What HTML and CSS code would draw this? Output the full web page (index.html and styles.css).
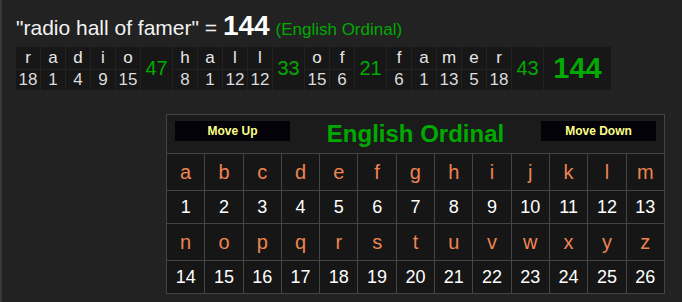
FILE: index.html
```html
<!DOCTYPE html>
<html>
<head>
<meta charset="utf-8">
<link rel="stylesheet" href="styles.css">
</head>
<body>
<div class="page">
  <div class="title">"radio hall of famer" = <b class="total">144</b> <span class="cipher-name">(English Ordinal)</span></div>
  <table class="word">
    <tr>
      <td class="l">r</td><td class="l">a</td><td class="l">d</td><td class="l">i</td><td class="l">o</td><td class="sum" rowspan="2">47</td>
      <td class="l">h</td><td class="l">a</td><td class="l">l</td><td class="l">l</td><td class="sum" rowspan="2">33</td>
      <td class="l">o</td><td class="l">f</td><td class="sum" rowspan="2">21</td>
      <td class="l">f</td><td class="l">a</td><td class="l">m</td><td class="l">e</td><td class="l">r</td><td class="sum" rowspan="2">43</td>
      <td class="grand" rowspan="2">144</td>
    </tr>
    <tr class="nums">
      <td>18</td><td>1</td><td>4</td><td>9</td><td>15</td>
      <td>8</td><td>1</td><td>12</td><td>12</td>
      <td>15</td><td>6</td>
      <td>6</td><td>1</td><td>13</td><td>5</td><td>18</td>
    </tr>
  </table>

  <table class="chart">
    <tr class="head">
      <td colspan="13">
        <div class="head-bar">
          <button class="move">Move Up</button>
          <span class="chart-title">English Ordinal</span>
          <button class="move">Move Down</button>
        </div>
      </td>
    </tr>
    <tr class="letters"><td>a</td><td>b</td><td>c</td><td>d</td><td>e</td><td>f</td><td>g</td><td>h</td><td>i</td><td>j</td><td>k</td><td>l</td><td>m</td></tr>
    <tr class="values"><td>1</td><td>2</td><td>3</td><td>4</td><td>5</td><td>6</td><td>7</td><td>8</td><td>9</td><td>10</td><td>11</td><td>12</td><td>13</td></tr>
    <tr class="letters"><td>n</td><td>o</td><td>p</td><td>q</td><td>r</td><td>s</td><td>t</td><td>u</td><td>v</td><td>w</td><td>x</td><td>y</td><td>z</td></tr>
    <tr class="values"><td>14</td><td>15</td><td>16</td><td>17</td><td>18</td><td>19</td><td>20</td><td>21</td><td>22</td><td>23</td><td>24</td><td>25</td><td>26</td></tr>
  </table>
</div>
</body>
</html>
```
FILE: styles.css
```css
html, body {
  margin: 0;
  padding: 0;
}
body {
  background: #222222;
  border-left: 2px solid #393939;
  min-height: 302px;
  box-sizing: border-box;
  font-family: "Liberation Sans", Arial, sans-serif;
  color: #e6e6e6;
}
.page {
  padding: 14px 0 0 14px;
}
.title {
  font-size: 21px;
  line-height: 24px;
  height: 26px;
  color: #f2f2f2;
  white-space: nowrap;
}
.total {
  font-size: 28px;
  line-height: 24px;
  font-weight: bold;
  color: #ffffff;
}
.cipher-name {
  font-size: 17px;
  color: #00aa00;
}
.word {
  border-collapse: separate;
  border-spacing: 1px;
  margin: 6px 0 0 -1px;
  background: #222222;
}
.word td {
  background: #171717;
  text-align: center;
  padding: 0;
  font-size: 17px;
}
.word td.l {
  width: 24px;
  height: 22px;
  color: #e8e8e8;
}
.word .nums td {
  height: 20px;
  color: #dcdcdc;
}
.word td.sum {
  width: 31px;
  font-size: 20px;
  color: #00aa00;
}
.word td.grand {
  width: 67px;
  font-size: 29px;
  font-weight: bold;
  color: #00aa00;
}
.chart {
  border-collapse: collapse;
  margin: 23px 0 0 150px;
  width: 499px;
  table-layout: fixed;
}
.chart td {
  border: 1px solid #444444;
  background: #161616;
  text-align: center;
  padding: 0;
}
.chart .head td {
  background: #1b1b1b;
  height: 38px;
}
.head-bar {
  display: flex;
  align-items: center;
  justify-content: space-between;
  padding: 0 8px;
}
.move {
  width: 115px;
  height: 20px;
  background: #020208;
  border: none;
  color: #ffff88;
  font-family: "Liberation Sans", Arial, sans-serif;
  font-size: 12px;
  font-weight: bold;
  padding: 0;
  margin-top: -6px;
}
.chart-title {
  font-size: 24px;
  font-weight: bold;
  color: #00aa00;
}
.chart .letters td {
  height: 36px;
  font-size: 20px;
  color: #ee8450;
}
.chart .values td {
  height: 32px;
  font-size: 18px;
  color: #ffffff;
}
```
